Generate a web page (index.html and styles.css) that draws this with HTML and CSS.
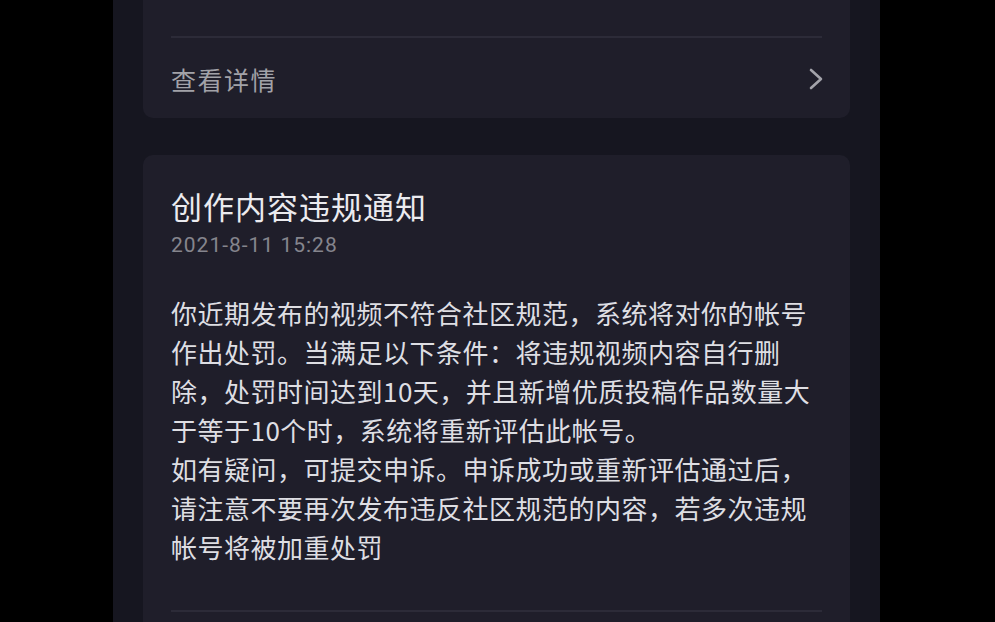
FILE: index.html
```html
<!DOCTYPE html>
<html lang="zh-CN">
<head>
    <meta charset="UTF-8">
    <meta name="viewport" content="width=device-width, initial-scale=1.0">
    <title>系统通知</title>
    <link rel="stylesheet" href="styles.css">
</head>
<body>
    <div class="screen">
        <div class="card card-top">
            <div class="card-head"></div>
            <div class="more-row">
                <span class="more-text">查看详情</span>
                <svg class="chevron" width="16" height="24" viewBox="0 0 16 24">
                    <polyline points="3,3 13,12 3,21" fill="none" stroke="#a3a3aa" stroke-width="2.6" stroke-linecap="round" stroke-linejoin="round"/>
                </svg>
            </div>
        </div>

        <div class="card">
            <h2 class="notice-title">创作内容违规通知</h2>
            <div class="notice-date">2021-8-11 15:28</div>
            <p class="notice-body">你近期发布的视频不符合社区规范，系统将对你的帐号<br>作出处罚。当满足以下条件：将违规视频内容自行删<br>除，处罚时间达到10天，并且新增优质投稿作品数量大<br>于等于10个时，系统将重新评估此帐号。<br>如有疑问，可提交申诉。申诉成功或重新评估通过后，<br>请注意不要再次发布违反社区规范的内容，若多次违规<br>帐号将被加重处罚</p>
            <div class="more-row"></div>
        </div>
    </div>
</body>
</html>
```

FILE: styles.css
```css
body { margin: 0; background-color: #000; font-family: "Noto Sans CJK SC", "Noto Sans", sans-serif; }
.screen { width: 707px; height: 622px; margin-left: 113px; padding: 0 30px; background-color: #161620; overflow: hidden; }
.card { background-color: #1f1e2a; border-radius: 10px; padding: 0 28px; margin-bottom: 37px; }
.card-top { margin-top: -30px; }
.card-head { height: 66px; }
.more-row { display: flex; align-items: center; justify-content: space-between; height: 80px; border-top: 2px solid #2c2b38; }
.more-text { color: #a2a2a8; font-size: 25px; letter-spacing: 1.5px; padding-top: 2px; }
.chevron { margin-right: -2px; padding-top: 2px; }
.notice-title { margin: 0; padding-top: 31px; font-size: 31px; font-weight: 400; letter-spacing: 1px; line-height: 40px; color: #ebebef; }
.notice-date { font-family: Roboto, "Noto Sans", sans-serif; color: #85858d; font-size: 21px; letter-spacing: 1px; line-height: 26px; margin-top: 6px; }
.notice-body { margin: 35px 0 44px; font-size: 26px; letter-spacing: 0.5px; line-height: 39px; color: #dedee3; white-space: nowrap; }
```
